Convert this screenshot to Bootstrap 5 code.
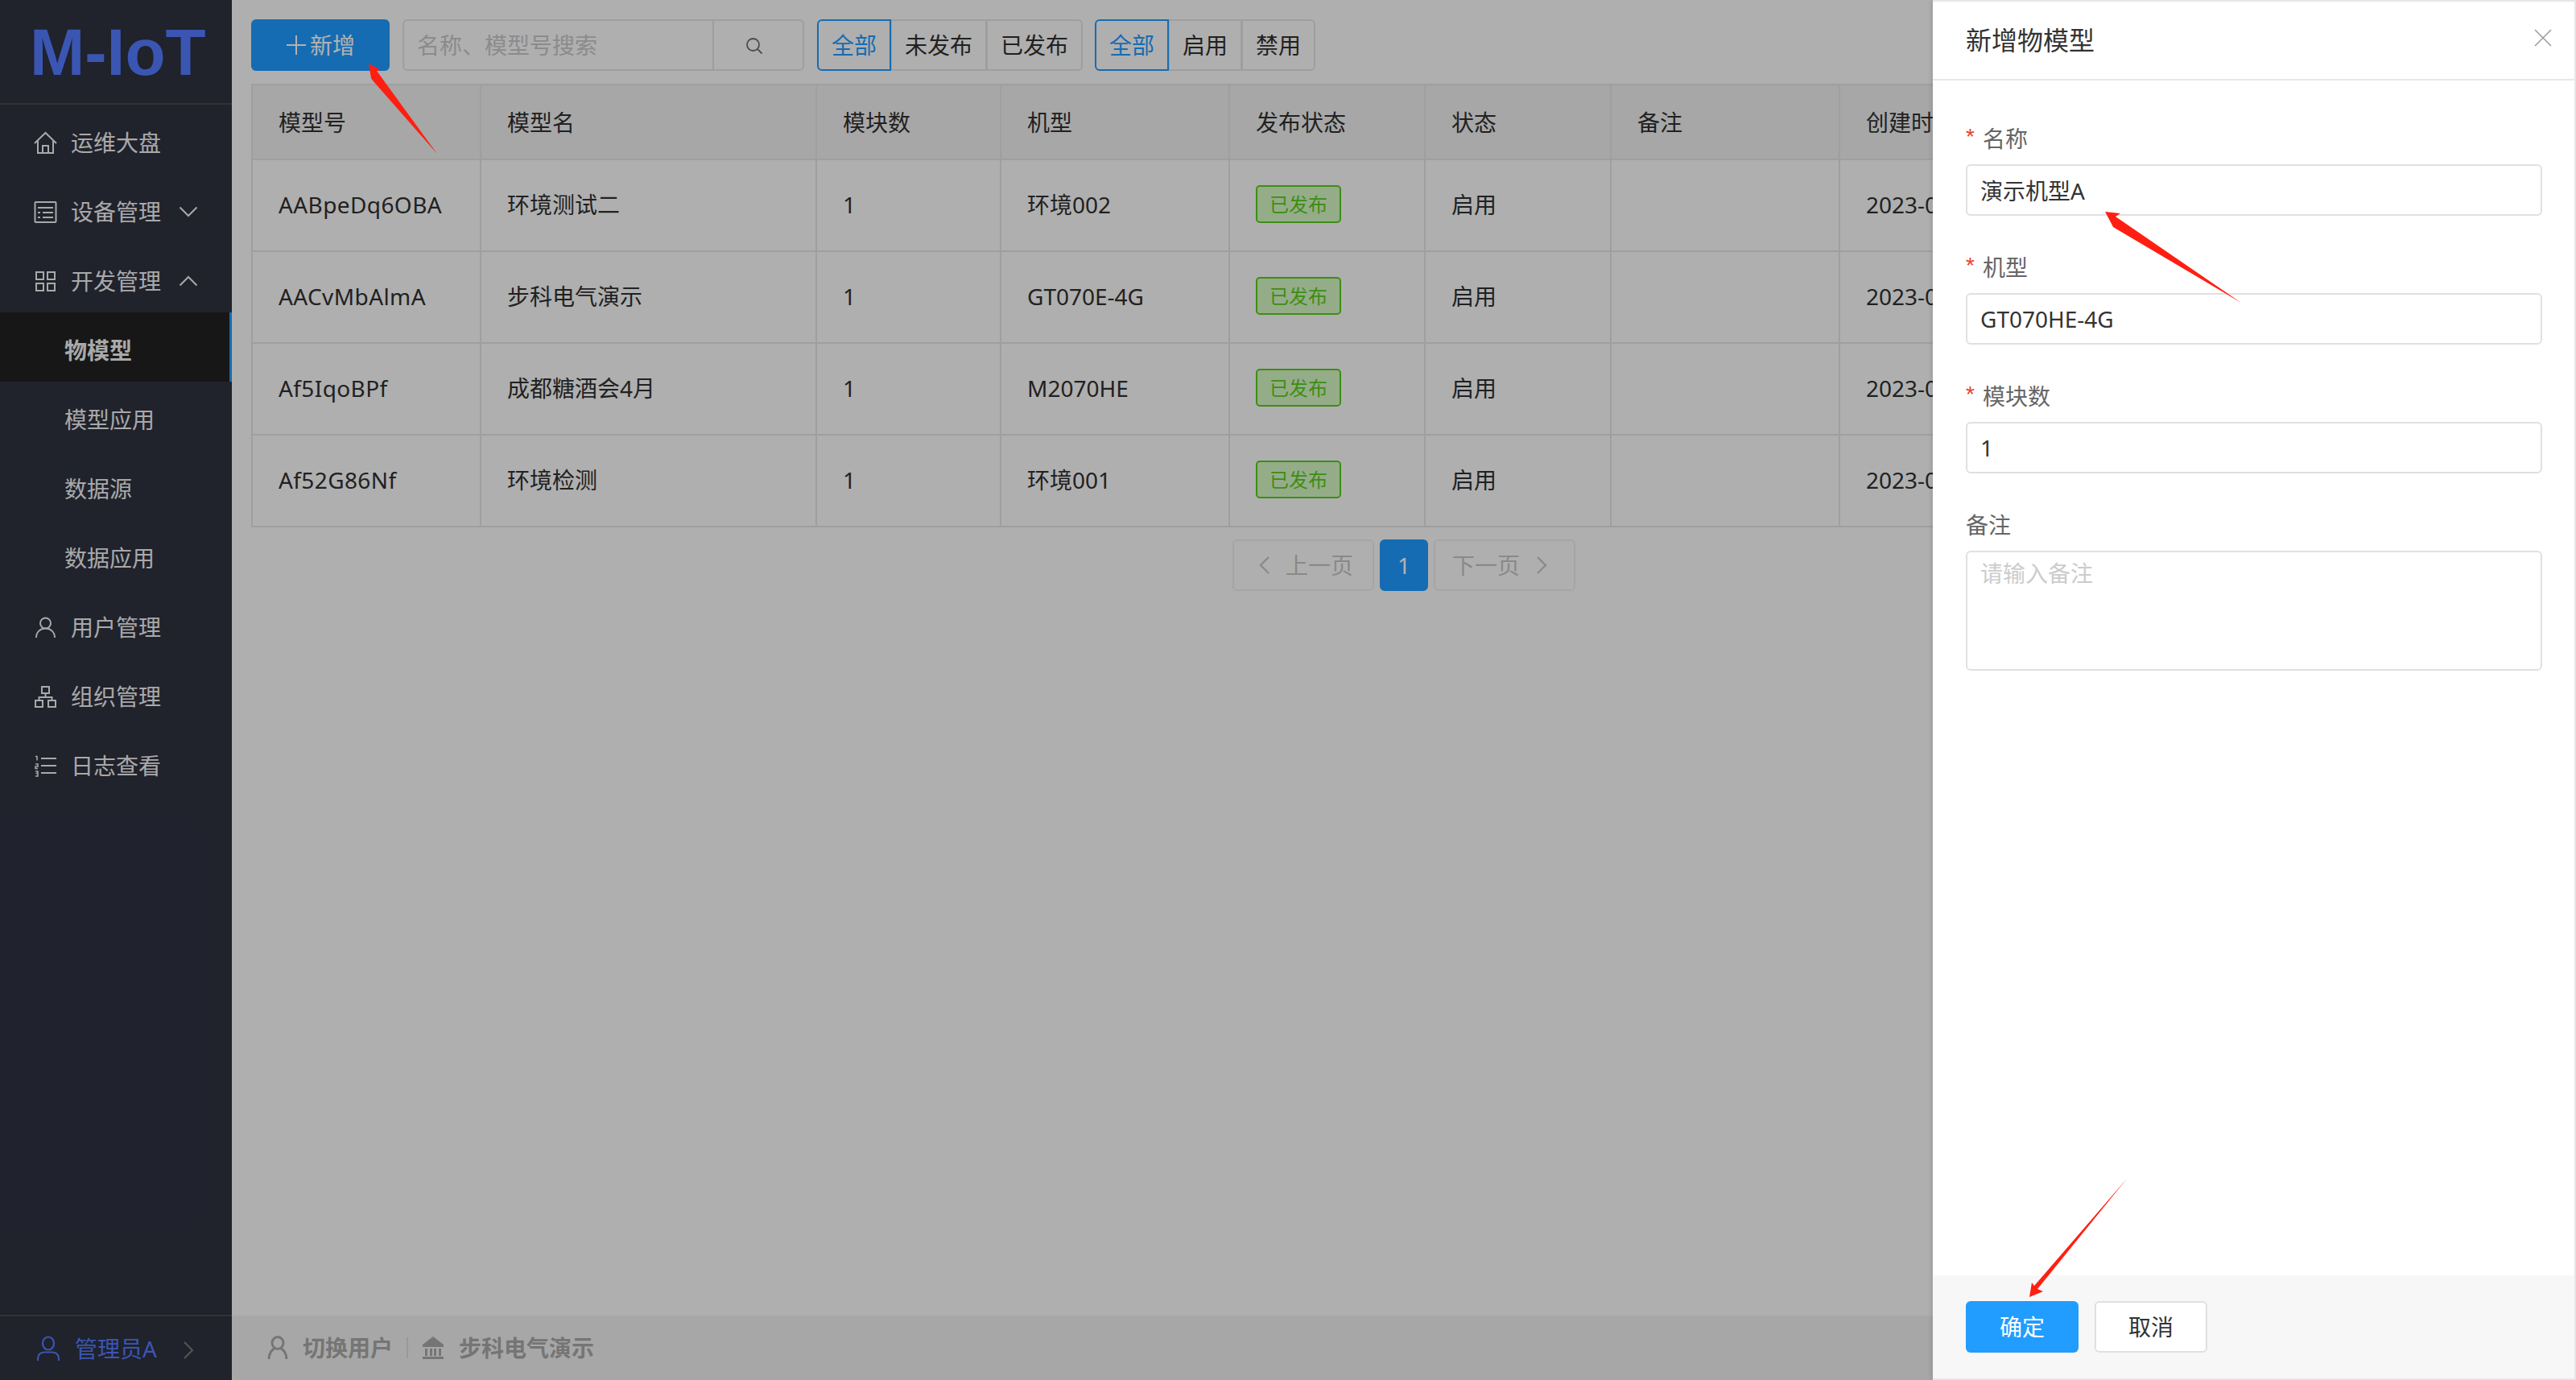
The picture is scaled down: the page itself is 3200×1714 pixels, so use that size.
<!DOCTYPE html>
<html lang="zh-CN">
<head>
<meta charset="utf-8">
<title>M-IoT</title>
<link href="https://cdn.jsdelivr.net/npm/bootstrap@5.3.0/dist/css/bootstrap.min.css" rel="stylesheet">
<style>
html,body{height:100%;overflow:hidden}
body{font-family:"Noto Sans","Noto Sans CJK SC",sans-serif;font-size:28px;color:#303030;background:#fbfbfb;position:relative}
.app-shell{height:1714px}
.side{width:288px;flex:none;background:#2e3140;color:#f2f2f2}
.brand{height:130px;border-bottom:2px solid #494949;font:700 82px/1 "Liberation Sans",sans-serif;color:#537cff;padding:24px 0 0 37px}
.menu{padding-top:4px}
.menu-row{height:86px;display:flex;align-items:center;color:#f2f2f2;text-decoration:none;padding-left:42px;line-height:40px;position:relative}
.menu-row svg.mi{width:29px;height:29px;margin-right:17px;flex:none}
.menu-row svg.ch{position:absolute;left:222px;top:35px;width:24px;height:16px}
.sub{padding-left:80px}
.sub.on{background:#212121;font-weight:700;border-right:3px solid #1f9bff;margin-top:-4px;margin-bottom:4px;padding-top:8px}
.side-foot{height:81px;border-top:2px solid #494949;display:flex;align-items:center;color:#537cff;padding-left:45px;position:relative}
.side-foot svg.mi{width:30px;height:32px;margin-right:18px}
.side-foot svg.ch{position:absolute;left:227px;top:30px;width:14px;height:24px}
.work{min-width:0}
.tools{padding:24px 24px 16px;gap:16px}
.add-btn{width:172px;height:64px;background:#1f9bff;border:0;border-radius:6px;color:#fff;font-size:28px;padding:0;display:flex;align-items:center;justify-content:center;gap:4px}
.add-btn svg{width:26px;height:26px}
.finder{width:499px;height:64px;flex-wrap:nowrap}
.finder .form-control{height:64px;font-size:28px;border:2px solid #e3e3e3;border-radius:6px 0 0 6px;background:transparent;padding:0 16px;box-shadow:none}
.finder .form-control::placeholder{color:#c8c8c8}
.finder .btn{width:114px;height:64px;border:2px solid #e3e3e3;border-radius:0 6px 6px 0;margin-left:-2px!important;padding:0 10px 0 0;background:transparent}
.finder svg{width:22px;height:22px}
.seg .btn{height:64px;font-size:28px;border:2px solid #e3e3e3;padding:0 16px;color:#303030;background:transparent;line-height:1;margin-left:-2px;border-radius:0}
.seg .btn:first-child{margin-left:0;border-radius:6px 0 0 6px}
.seg .btn:last-child{border-radius:0 6px 6px 0}
.seg .btn.picked{border-color:#1f9bff;color:#1f9bff;z-index:2}
.seg + .seg{margin-left:-1px}
.grid-wrap{padding:0 24px}
.grid{table-layout:fixed;width:2864px;margin:0;border-collapse:collapse;--bs-table-bg:transparent;--bs-table-color:#303030}
.grid th,.grid td{border:2px solid #e4e4e4;padding:0 0 0 32px;vertical-align:middle;font-weight:400;white-space:nowrap;overflow:hidden}
.grid thead th{height:93px;background:#f0f0f0}
.grid tbody td{height:114px;padding-bottom:3px}
.grid tbody td:first-child{letter-spacing:.4px}
.tag{display:inline-flex;align-items:center;justify-content:center;width:106px;height:47px;border:2px solid #58cc1c;border-radius:5px;background:#d6f7c4;color:#58cc1c;font-size:24px;line-height:1;letter-spacing:0}
.pager{gap:8px;margin:15px 0 0;--bs-pagination-font-size:28px}
.pager .page-link{height:64px;display:flex;align-items:center;justify-content:center;border:2px solid #ececec;border-radius:6px!important;background:transparent;color:#c4c4c4;padding:0;margin:0}
.pager .pg-side .page-link{width:176px;justify-content:flex-start}
.pager .pg-prev .page-link{padding-left:31px;gap:19px}
.pager .pg-next .page-link{padding-left:21px;gap:20px}
.pager .pg-side svg{width:14px;height:24px}
.pager .active .page-link{width:60px;background:#1f9bff;border-color:#1f9bff;color:#fff}
.work-foot{height:80px;background:#f0f0f0;color:#a8a8a8;font-weight:700;padding-left:44px}
.work-foot svg{width:26px;height:30px;margin-right:18px}
.work-foot .sep{width:2px;height:26px;background:#dcdcdc;margin:0 17px}
.veil{position:absolute;inset:0;background:rgba(0,0,0,.3);z-index:5}
.drawer-panel{position:absolute;top:0;right:0;bottom:0;width:799px;background:#fff;border:2px solid #e6e6e6;border-left:0;box-shadow:-3px 0 4px rgba(0,0,0,.08);z-index:6}
.drawer-top{height:98px;border-bottom:2px solid #e8e8e8;padding:0 41px;color:#333;font-size:32px;position:relative}
.drawer-top svg{position:absolute;left:747px;top:34px;width:22px;height:22px}
.drawer-form{padding:52px 41px 0}
.field{margin-bottom:44px}
.field label{display:flex;align-items:center;height:40px;color:#666;margin-bottom:12px}
.field .req{color:#e8402a;margin-right:10px;font-size:28px;line-height:1;font-family:"Liberation Sans",sans-serif;position:relative;top:-2px}
.field .form-control{width:716px;height:64px;font-size:28px;color:#333;border:2px solid #e0e0e0;border-radius:6px;padding:0 16px;box-shadow:none}
.field textarea.form-control{height:149px;padding:6px 16px;line-height:40px;resize:none}
.field .form-control::placeholder{color:#ccc}
.drawer-foot{height:128px;background:#f7f7f7;padding:32px 41px 0;gap:20px}
.drawer-foot .btn{width:140px;height:64px;font-size:28px;border-radius:6px;padding:0}
.ok-btn{background:#219cff;border:0;color:#fff}
.no-btn{background:#fff;border:2px solid #e0e0e0;color:#333}
.marks{position:absolute;left:0;top:0;width:3200px;height:1714px;pointer-events:none;z-index:7}
</style>
</head>
<body>
<div class="app-shell d-flex">
  <aside class="side d-flex flex-column">
    <div class="brand">M-IoT</div>
    <nav class="menu flex-grow-1">
      <a class="menu-row" href="#"><svg class="mi" viewBox="0 0 29 29" fill="none" stroke="currentColor" stroke-width="2"><path d="M1 15 14.500 2 28 15M5 12v15h19V12M11 27v-9h7v9"/></svg>运维大盘</a>
      <a class="menu-row" href="#"><svg class="mi" viewBox="0 0 29 29" fill="none" stroke="currentColor" stroke-width="2"><rect x="1.500" y="2" width="26" height="25" rx="1"/><path d="M5 9h19M5 15h3M11 15h13M5 21h3M11 21h13"/></svg>设备管理<svg class="ch" viewBox="0 0 24 16" fill="none" stroke="currentColor" stroke-width="2"><path d="M1.500 2.500 12 13 22.500 2.500"/></svg></a>
      <a class="menu-row" href="#"><svg class="mi" viewBox="0 0 29 29" fill="none" stroke="currentColor" stroke-width="2"><rect x="3" y="3" width="9" height="9"/><rect x="17" y="3" width="9" height="9"/><rect x="3" y="17" width="9" height="9"/><rect x="17" y="17" width="9" height="9"/></svg>开发管理<svg class="ch" viewBox="0 0 24 16" fill="none" stroke="currentColor" stroke-width="2"><path d="M1.500 13.500 12 3 22.500 13.500"/></svg></a>
      <a class="menu-row sub on" href="#">物模型</a>
      <a class="menu-row sub" href="#">模型应用</a>
      <a class="menu-row sub" href="#">数据源</a>
      <a class="menu-row sub" href="#">数据应用</a>
      <a class="menu-row" href="#"><svg class="mi" viewBox="0 0 29 29" fill="none" stroke="currentColor" stroke-width="2"><circle cx="14.500" cy="9" r="6.500"/><path d="M3 27c0-7 5-11.500 11.500-11.500S26 20 26 27"/></svg>用户管理</a>
      <a class="menu-row" href="#"><svg class="mi" viewBox="0 0 29 29" fill="none" stroke="currentColor" stroke-width="2"><rect x="10" y="2" width="9" height="8"/><rect x="2" y="19" width="9" height="8"/><rect x="18" y="19" width="9" height="8"/><path d="M14.500 10v5M6.500 19v-4h16v4"/></svg>组织管理</a>
      <a class="menu-row" href="#"><svg class="mi" viewBox="0 0 29 29" fill="none" stroke="currentColor" stroke-width="2"><path d="M9 5h19M9 14h19M9 23h19"/><path stroke-width="1.500" d="M2 2.500h2v5M2 12h3v3H2v2.500h3M2 21h3v2.500H2.500M5 23.500V27H2"/></svg>日志查看</a>
    </nav>
    <div class="side-foot"><svg class="mi" viewBox="0 0 30 32" fill="none" stroke="currentColor" stroke-width="2.200"><ellipse cx="15" cy="9.500" rx="7" ry="8"/><path d="M2 31v-3c0-5 4-7.500 8-7.500h10c4 0 8 2.500 8 7.500v3"/></svg>管理员A<svg class="ch" viewBox="0 0 14 24" fill="none" stroke="#7d7d7d" stroke-width="2"><path d="M2 2 12 12 2 22"/></svg></div>
  </aside>
  <main class="work flex-grow-1 d-flex flex-column">
    <div class="tools d-flex align-items-center">
      <button class="add-btn" type="button"><svg viewBox="0 0 26 26" fill="none" stroke="currentColor" stroke-width="2"><path d="M13 1v24M1 13h24"/></svg>新增</button>
      <div class="input-group finder">
        <input class="form-control" type="text" placeholder="名称、模型号搜索">
        <button class="btn" type="button"><svg viewBox="0 0 22 22" fill="none" stroke="#6e6e6e" stroke-width="1.800"><circle cx="9.500" cy="9.500" r="7.500"/><path d="m15 15 5.500 5.500"/></svg></button>
      </div>
      <div class="btn-group seg"><button class="btn picked" type="button">全部</button><button class="btn" type="button">未发布</button><button class="btn" type="button">已发布</button></div>
      <div class="btn-group seg"><button class="btn picked" type="button">全部</button><button class="btn" type="button">启用</button><button class="btn" type="button">禁用</button></div>
    </div>
    <div class="grid-wrap">
      <table class="table grid">
        <colgroup><col style="width:284px"><col style="width:417px"><col style="width:229px"><col style="width:284px"><col style="width:243px"><col style="width:231px"><col style="width:284px"><col></colgroup>
        <thead><tr><th>模型号</th><th>模型名</th><th>模块数</th><th>机型</th><th>发布状态</th><th>状态</th><th>备注</th><th>创建时间</th></tr></thead>
        <tbody>
          <tr><td>AABpeDq6OBA</td><td>环境测试二</td><td>1</td><td>环境002</td><td><span class="tag">已发布</span></td><td>启用</td><td></td><td>2023-06-01</td></tr>
          <tr><td>AACvMbAlmA</td><td>步科电气演示</td><td>1</td><td>GT070E-4G</td><td><span class="tag">已发布</span></td><td>启用</td><td></td><td>2023-06-01</td></tr>
          <tr><td>Af5IqoBPf</td><td>成都糖酒会4月</td><td>1</td><td>M2070HE</td><td><span class="tag">已发布</span></td><td>启用</td><td></td><td>2023-06-01</td></tr>
          <tr><td>Af52G86Nf</td><td>环境检测</td><td>1</td><td>环境001</td><td><span class="tag">已发布</span></td><td>启用</td><td></td><td>2023-06-01</td></tr>
        </tbody>
      </table>
    </div>
    <ul class="pagination justify-content-center pager">
      <li class="page-item pg-side pg-prev"><a class="page-link" href="#"><svg viewBox="0 0 14 24" fill="none" stroke="currentColor" stroke-width="2.200"><path d="M12 2 2 12 12 22"/></svg>上一页</a></li>
      <li class="page-item active"><a class="page-link" href="#">1</a></li>
      <li class="page-item pg-side pg-next"><a class="page-link" href="#">下一页<svg viewBox="0 0 14 24" fill="none" stroke="currentColor" stroke-width="2.200"><path d="M2 2 12 12 2 22"/></svg></a></li>
    </ul>
    <div class="flex-grow-1"></div>
    <div class="work-foot d-flex align-items-center">
      <svg viewBox="0 0 26 30" fill="none" stroke="currentColor" stroke-width="3"><ellipse cx="13" cy="9" rx="7" ry="7.500"/><path d="M2 29c0-7 4-12 7-13M24 29c0-7-4-12-7-13"/></svg>切换用户<span class="sep"></span><svg viewBox="0 0 28 30" fill="currentColor" style="width:28px"><path d="M14 1 27 11v3H1v-3z"/><path d="M4 16h3v9H4zM10 16h3v9h-3zM15 16h3v9h-3zM21 16h3v9h-3zM1 26h26v3H1z"/></svg>步科电气演示
    </div>
  </main>
</div>
<div class="veil"></div>
<section class="drawer-panel d-flex flex-column">
  <header class="drawer-top d-flex align-items-center">新增物模型<svg viewBox="0 0 22 22" fill="none" stroke="#999" stroke-width="1.500"><path d="m1 1 20 20M21 1 1 21"/></svg></header>
  <form class="drawer-form flex-grow-1">
    <div class="field"><label><span class="req">*</span>名称</label><input class="form-control" type="text" value="演示机型A"></div>
    <div class="field"><label><span class="req">*</span>机型</label><input class="form-control" type="text" value="GT070HE-4G"></div>
    <div class="field"><label><span class="req">*</span>模块数</label><input class="form-control" type="text" value="1"></div>
    <div class="field"><label>备注</label><textarea class="form-control" placeholder="请输入备注"></textarea></div>
  </form>
  <footer class="drawer-foot d-flex">
    <button class="btn ok-btn" type="button">确定</button>
    <button class="btn no-btn" type="button">取消</button>
  </footer>
</section>
<svg class="marks" viewBox="0 0 3200 1714" fill="#ff1f12">
  <path d="M458 79 473 87 468 88 543 191 463 100 461 97Z"/>
  <path d="M2615 263 2634 265 2628 269 2784 376 2625 282 2623 278Z"/>
  <path d="M2521 1611 2538 1604 2531 1601 2642 1464 2527 1597 2524 1593Z"/>
</svg>
<script src="https://cdn.jsdelivr.net/npm/bootstrap@5.3.0/dist/js/bootstrap.bundle.min.js"></script>
</body>
</html>
